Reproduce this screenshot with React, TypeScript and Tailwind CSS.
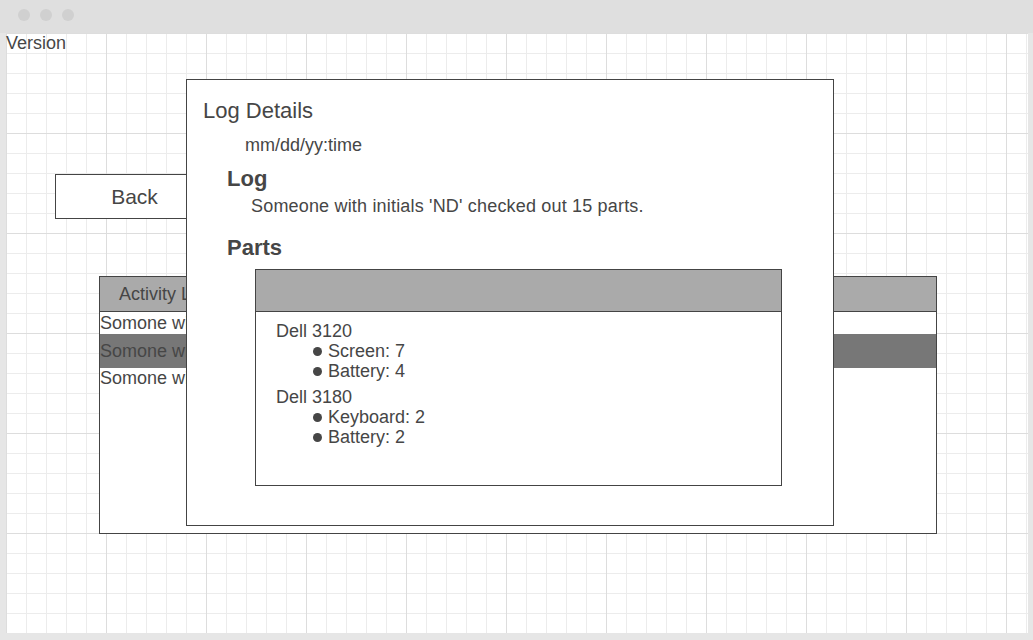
export default function App() {
  const parts = [
    { model: "Dell 3120", items: ["Screen: 7", "Battery: 4"] },
    { model: "Dell 3180", items: ["Keyboard: 2", "Battery: 2"] },
  ]

  return (
    <div className="w-[1033px] h-[640px] bg-[#e6e6e6] flex flex-col overflow-hidden text-[#464646] font-['Liberation_Sans',Arial,sans-serif]">
      {/* Title bar */}
      <div className="h-[33px] shrink-0 bg-[#dfdfdf] flex items-center gap-[10px] pl-[18px] pb-[3px]">
        <span className="w-3 h-3 rounded-full bg-[#d0d0d0]" />
        <span className="w-3 h-3 rounded-full bg-[#d0d0d0]" />
        <span className="w-3 h-3 rounded-full bg-[#d0d0d0]" />
      </div>

      {/* Canvas */}
      <div className="flex-1 pl-[6px] pr-[5px] pb-[7px] flex">
        <div className="relative flex-1 bg-white bg-[linear-gradient(to_right,#dddddd_1px,transparent_1px),linear-gradient(to_bottom,#dddddd_1px,transparent_1px),linear-gradient(to_right,#ececec_1px,transparent_1px),linear-gradient(to_bottom,#ececec_1px,transparent_1px)] bg-[length:100px_100px,100px_100px,20px_20px,20px_20px]">
          <div className="text-[18px] leading-[20px]">Version</div>

          <div className="ml-[49px] mt-[121px] w-[159px] h-[45px] border border-[#444] bg-white flex items-center justify-center text-[21px]">
            Back
          </div>

          <div className="ml-[93px] mt-[57px] w-[838px] h-[258px] border border-[#444] bg-white text-[18px]">
            <div className="h-[35px] bg-[#aaaaaa] border-b border-[#444] flex items-center pl-[19px]">
              Activity Log
            </div>
            <div className="h-[22px] flex items-center">Somone with initials 'ND' checked out 15 parts.</div>
            <div className="h-[34px] bg-[#777777] flex items-center">Somone with initials 'ND' checked out 15 parts.</div>
            <div className="h-[20px] flex items-center">Somone with initials 'ND' checked out 15 parts.</div>
          </div>

          {/* Log details modal */}
          <div className="absolute left-[180px] top-[46px] w-[648px] h-[447px] border border-[#444] bg-white flex flex-col">
            <div className="ml-[16px] mt-[18px] text-[22px] leading-[26px]">Log Details</div>
            <div className="ml-[58px] mt-[10px] text-[18px] leading-[22px]">mm/dd/yy:time</div>
            <div className="ml-[40px] mt-[10px] text-[22px] leading-[26px] font-bold">Log</div>
            <div className="ml-[64px] mt-[3px] text-[18px] leading-[22px] tracking-[0.18px]">
              Someone with initials 'ND' checked out 15 parts.
            </div>
            <div className="ml-[40px] mt-[18px] text-[22px] leading-[26px] font-bold">Parts</div>
            <div className="ml-[68px] mt-[8px] w-[527px] h-[217px] border border-[#444] flex flex-col">
              <div className="h-[42px] shrink-0 bg-[#aaaaaa] border-b border-[#444]" />
              <div className="pt-[9px] pl-[20px] flex flex-col gap-[6px] text-[18px] leading-[20px]">
                {parts.map((p) => (
                  <div key={p.model}>
                    <div>{p.model}</div>
                    {p.items.map((it) => (
                      <div key={it} className="flex items-center pl-[37px]">
                        <span className="w-[9px] h-[9px] rounded-full bg-[#464646] mr-[6px] mt-[1px]" />
                        {it}
                      </div>
                    ))}
                  </div>
                ))}
              </div>
            </div>
          </div>
        </div>
      </div>
    </div>
  )
}
